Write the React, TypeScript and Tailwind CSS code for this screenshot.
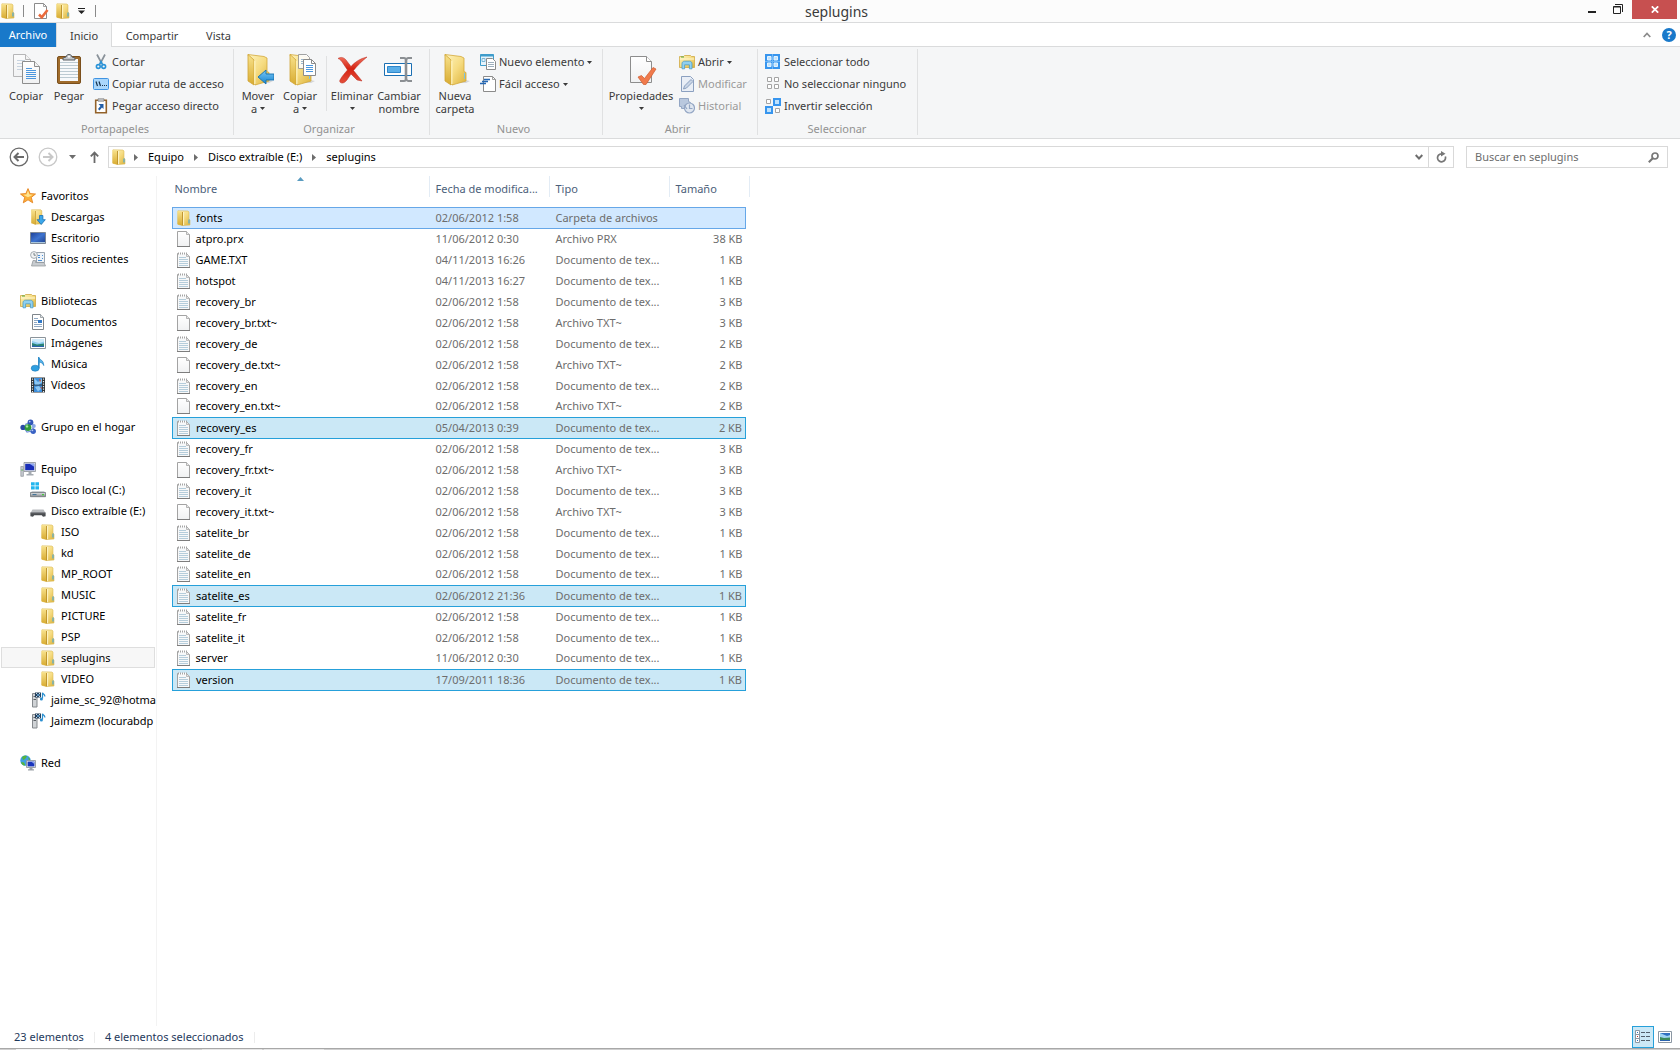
import type { ReactNode } from "react"
import { clsx } from "clsx"

type IconProps = { className?: string }

/* ---------- shared gradients ---------- */

function Gradients() {
  return (
    <svg className="absolute size-0" aria-hidden="true">
      <defs>
        <linearGradient id="gold" x1="0" y1="0" x2="1" y2="1">
          <stop offset="0" stopColor="#fdf3bd" />
          <stop offset="0.5" stopColor="#f6dc82" />
          <stop offset="1" stopColor="#dcb23a" />
        </linearGradient>
        <linearGradient id="goldDark" x1="0" y1="0" x2="0" y2="1">
          <stop offset="0" stopColor="#f8e28c" />
          <stop offset="1" stopColor="#d8ab30" />
        </linearGradient>
        <linearGradient id="sky" x1="0" y1="0" x2="0" y2="1">
          <stop offset="0" stopColor="#7cc8f5" />
          <stop offset="1" stopColor="#1583d0" />
        </linearGradient>
        <linearGradient id="page" x1="0" y1="0" x2="0" y2="1">
          <stop offset="0" stopColor="#ffffff" />
          <stop offset="1" stopColor="#f0f1f2" />
        </linearGradient>
        <linearGradient id="navy" x1="0" y1="0" x2="1" y2="1">
          <stop offset="0" stopColor="#1c3f96" />
          <stop offset="0.5" stopColor="#3f74cf" />
          <stop offset="1" stopColor="#1b3d8c" />
        </linearGradient>
        <linearGradient id="red" x1="0" y1="0" x2="0" y2="1">
          <stop offset="0" stopColor="#f0705c" />
          <stop offset="0.45" stopColor="#d52312" />
          <stop offset="1" stopColor="#e4503c" />
        </linearGradient>
        <linearGradient id="metal" x1="0" y1="0" x2="0" y2="1">
          <stop offset="0" stopColor="#dfe2e5" />
          <stop offset="1" stopColor="#85898d" />
        </linearGradient>
      </defs>
    </svg>
  )
}

/* ---------- small icons, 16px ---------- */

function Svg16({ children, className }: { children: ReactNode; className?: string }) {
  return (
    <svg width="16" height="16" viewBox="0 0 16 16" fill="none" aria-hidden="true" className={clsx("shrink-0", className)}>
      {children}
    </svg>
  )
}

const FolderIcon = ({ className }: IconProps) => (
  <Svg16 className={className}>
    <path d="M2 .8 12 1l1 1v7l1 1v5l-7 .6-5-1.2z" fill="url(#gold)" stroke="#dcbc5c" strokeWidth=".6" />
    <path d="M1.4.8 6 2v13.6l-4.6-1.4z" fill="url(#goldDark)" />
    <path d="M6.5 2v13.5" stroke="#b98d26" strokeWidth=".9" />
    <path d="M7.6 2v13" stroke="#fff6c8" strokeWidth="1" />
    <path d="M13 9.5v4" stroke="#4ea9d8" strokeWidth="1.2" />
  </Svg16>
)

const FileIcon = () => (
  <Svg16>
    <path d="M1.5 .5h9l3 3v12h-12z" fill="url(#page)" stroke="#a3a3a3" />
    <path d="M10.5 .5v3h3" fill="#e8e8e8" stroke="#a3a3a3" strokeWidth=".8" />
    <path d="M1 15.5h13" stroke="#7d7d7d" />
  </Svg16>
)

const TextFileIcon = () => (
  <Svg16>
    <path d="M1.5 1.5h9l3 3v11h-12z" fill="#f7f8f9" stroke="#a3a3a3" />
    <path d="M2 1.5h9" stroke="#fff" strokeWidth="1.4" />
    <path d="M2.5 .5v2M4.500 .5v2M6.5 .5v2M8.5 .5v2M10.5 .5v2" stroke="#9a9a9a" strokeWidth=".9" />
    <path d="M10.5 2v2.500h3" fill="#e6e6e6" stroke="#a6a6a6" strokeWidth=".7" />
    <path d="M3 5.5h7M3 7.5h9M3 9.5h9M3 11.5h9M3 13.5h9" stroke="#b5cddb" />
    <path d="M1 15.5h13" stroke="#7d7d7d" />
  </Svg16>
)

const StarIcon = () => (
  <Svg16>
    <path d="M8 .6l2.1 5 5.4.4-4.2 3.4 1.4 5.4L8 11.8l-4.7 3 1.4-5.4L.5 6l5.4-.4z" fill="#fbb03a" stroke="#e58320" strokeWidth=".9" />
    <path d="M8 2.6l1.4 3.8 3.6.3L8 9.3 3.2 6.7l3.3-.3z" fill="#ffe592" />
  </Svg16>
)

const DownloadsIcon = () => (
  <Svg16>
    <path d="M1.5 .8h9.3l1 1v13l-7 .4z" fill="url(#gold)" stroke="#d7b451" strokeWidth=".6" />
    <path d="M1.2.8 5 2v13.6l-3.8-1.4z" fill="url(#goldDark)" />
    <path d="M5.5 2v13.5" stroke="#c79c33" strokeWidth=".8" />
    <path d="M9.5 6.5h3.4v4.2h2.4l-4.1 4.8-4.1-4.8h2.4z" fill="#3ba7ea" stroke="#1b71b5" strokeWidth=".8" />
  </Svg16>
)

const DesktopIcon = () => (
  <Svg16>
    <path d="M.5 2.5h15v11h-15z" fill="url(#navy)" stroke="#7d8896" />
    <path d="M1 12.5h14" stroke="#a9c6dc" />
  </Svg16>
)

const RecentIcon = () => (
  <Svg16>
    <path d="M6.5 1.5h8v10h-8z" fill="#eef3f8" stroke="#9aa5af" />
    <path d="M8 4.5h2M8 6.5h2M12 4.5h1M12 7.5h1M8 9.5h4" stroke="#4a90d8" />
    <circle cx="4" cy="4" r="3.4" fill="#f2f4f5" stroke="#9ca3a8" strokeWidth=".9" />
    <path d="M4 2v2.2h1.8" stroke="#5c646b" strokeWidth=".8" />
    <path d="M3 9.5h2.5v2H14l1.5 3.5H1.5z" fill="#c8ccd0" stroke="#8d9297" strokeWidth=".7" />
  </Svg16>
)

const LibraryIcon = () => (
  <Svg16>
    <path d="M.5 2.5h4l1-1h6l1 1h3v11H.5z" fill="url(#gold)" stroke="#cfa842" strokeWidth=".8" />
    <path d="M2 3h3" stroke="#58a942" />
    <path d="M.8 5h14.4" stroke="#fff8d5" />
    <path d="M3 14.8v-5c0-1.6 1-2.6 2.4-2.6h5.2c1.4 0 2.4 1 2.4 2.6v5h-2.6v-4H5.6v4z" fill="#8fd0f0" stroke="#4a9cc8" strokeWidth=".8" />
  </Svg16>
)

const DocumentsIcon = () => (
  <Svg16>
    <path d="M2.5 .5h8l3 3v12h-11z" fill="#fff" stroke="#7f868c" />
    <path d="M10.5 .5v3h3" fill="#dfe3e6" stroke="#8d9499" strokeWidth=".8" />
    <path d="M4 4.5h4M4 6.5h4M4 8.5h3M4 10.5h8M4 12.5h8" stroke="#90a9c4" />
    <path d="M8 6h4v3H8z" fill="#2f78c8" />
  </Svg16>
)

const PicturesIcon = () => (
  <Svg16>
    <path d="M.5 2.5h15v11h-15z" fill="#fff" stroke="#8b949b" />
    <path d="M2 4h12v8H2z" fill="#8fcdf0" />
    <path d="M2 4h12v2.5L9 8 2 6z" fill="#cfeaf9" />
    <path d="M2 8l5 1.500 7-1V12H2z" fill="#2b8375" />
    <path d="M2 10.5l5 .5h7v1H2z" fill="#2a62ae" />
  </Svg16>
)

const MusicIcon = () => (
  <Svg16>
    <path d="M8.5 12V1c1 3 5.2 2.8 5.2 8.5C13 7 11 6.5 9.6 6.2" fill="#58b4ea" stroke="#2788c6" strokeWidth=".8" />
    <ellipse cx="5.2" cy="12.2" rx="4" ry="3" fill="#2f9fe0" stroke="#1f79b6" strokeWidth=".6" />
    <path d="M9 12V1.5" stroke="#2788c6" strokeWidth="1.2" />
  </Svg16>
)

const VideosIcon = () => (
  <Svg16>
    <path d="M1 .5h14v15H1z" fill="#2e3438" />
    <path d="M4 1h8v6.5H4zM4 8.5h8V15H4z" fill="#3d8fdc" />
    <path d="M4 1l4 4 4-3.5v4L9 7.5H5zM5 10l4-1 2 3-3 2.5z" fill="#8cc7f3" />
    <path d="M9 2l2 1-1 2.5zM10 9.5l2 1v2z" fill="#c44f35" />
    <path d="M2.5 1.5v14M13.5 1.5v14" stroke="#e6eaec" strokeWidth="1.2" strokeDasharray="1.3 1.2" />
  </Svg16>
)

const HomegroupIcon = () => (
  <Svg16>
    <path d="M5 5.5l6-2.5M4 9l3 4 5-1M13 5v7" stroke="#6f8fd8" strokeWidth="1.2" />
    <circle cx="10.5" cy="3.4" r="2.9" fill="#3157b8" />
    <circle cx="3" cy="8.4" r="2.6" fill="#2a4aa6" />
    <circle cx="13.2" cy="12.2" r="2.7" fill="#3a62c4" />
    <circle cx="13.8" cy="7" r="2" fill="#8aa8e6" />
    <circle cx="8" cy="8.6" r="3.4" fill="#2f9a3a" />
    <circle cx="7" cy="7.4" r="1.2" fill="#a8e6a0" />
    <circle cx="9.7" cy="2.6" r=".9" fill="#b6c8f2" />
    <circle cx="12.4" cy="11.3" r=".9" fill="#b6c8f2" />
  </Svg16>
)

const ComputerIcon = () => (
  <Svg16>
    <path d="M4 1.5h11.5v9H4z" fill="#dde1e6" stroke="#8b9198" strokeWidth=".8" />
    <path d="M5.2 2.8h9v6.4h-9z" fill="#1a2fb8" />
    <path d="M9.5 2.8h4.7v3z" fill="#8fa8f0" />
    <path d="M8.5 11h3v2h2v1.5H6.5V13h2z" fill="#a5abb2" />
    <path d="M.8 5.5h2.6v9.8H.8z" fill="#c6cad0" stroke="#7f858c" strokeWidth=".6" />
    <path d="M1.4 9h1.4" stroke="#3fae3a" />
  </Svg16>
)

const LocalDiskIcon = () => (
  <Svg16>
    <path d="M1 .2h3.7v3.3H1zM5.4 .2H9v3.3H5.4zM1 4.2h3.7v3.2H1zM5.4 4.2H9v3.2H5.4z" fill="#22b5ee" />
    <path d="M2 9h12l1.5 2H.5z" fill="#c9ced3" />
    <path d="M.5 10.5h15v4.2H.5z" fill="url(#metal)" stroke="#62686e" strokeWidth=".7" />
    <path d="M2.5 12.6h4" stroke="#3a6f96" />
    <path d="M12 12.6h2" stroke="#46c83c" strokeWidth="1.4" />
  </Svg16>
)

const RemovableDiskIcon = () => (
  <Svg16>
    <path d="M2.5 6.5h11l2 3.5H.5z" fill="#b9bcbf" />
    <path d="M.4 9.5h15.2v3.8l-2.6.4-1.2-1.4H4.2L3 13.7l-2.6-.4z" fill="#4a4d50" />
    <path d="M1 9.8h14" stroke="#85888b" strokeWidth=".8" />
  </Svg16>
)

const DeviceIcon = () => (
  <Svg16>
    <path d="M2.5 1.5H7V15H2.5z" fill="#d0d3d6" stroke="#85898d" />
    <path d="M3.5 4.5H6M3.5 7.5H6" stroke="#5a5f64" />
    <path d="M5 .5h6v5H5z" fill="#25405c" />
    <path d="M6 1.5h1M9 1.5h1M6 4.500h1M9 4.500h1" stroke="#e2eef6" strokeWidth=".9" />
    <path d="M7 3h2.500" stroke="#6db4e6" strokeWidth="1.4" />
    <path d="M12.500 6.500V.8c.6 1.300 2.400 1.300 2.400 3.600" stroke="#2a8fd0" strokeWidth="1.2" />
    <circle cx="11.400" cy="7" r="1.5" fill="#2a8fd0" />
  </Svg16>
)

const NetworkIcon = () => (
  <Svg16>
    <circle cx="5.5" cy="5.5" r="5.2" fill="#3f9fe2" />
    <path d="M2 2.2c1.8-1.8 4-1.6 5-1L5.2 4 3 5zM1 7l3 .5 1.4 3H4C2.4 10 1.4 8.6 1 7zM8 2l2.2 2-1 2z" fill="#55b53c" />
    <path d="M6.5 5.5h9v7h-9z" fill="#e4e8ec" stroke="#888e95" strokeWidth=".8" />
    <path d="M7.6 6.6h6.8v4.8H7.6z" fill="#1a35bd" />
    <path d="M11 6.6h3.4V9z" fill="#8fa8f0" />
    <path d="M9.5 13h3v1.2H14v1.3H8v-1.3h1.5z" fill="#9da3aa" />
  </Svg16>
)

const CutIcon = () => (
  <Svg16>
    <path d="M4 .5L9 10M12 .5L7 10" stroke="#8a929a" strokeWidth="1.7" />
    <circle cx="5.3" cy="12.5" r="1.9" stroke="#2a93d8" strokeWidth="1.6" />
    <circle cx="10.7" cy="12.5" r="1.9" stroke="#2a93d8" strokeWidth="1.6" />
    <path d="M6.5 10.500L8 7.500l1.500 3" stroke="#2a93d8" strokeWidth="1.5" />
  </Svg16>
)

const CopyPathIcon = () => (
  <Svg16>
    <rect x=".5" y="2.5" width="15" height="11" rx="1" fill="#a9d6fb" stroke="#3f93e2" />
    <path d="M3 5.5l1.5 4.500M6 5.500l1.500 4.500" stroke="#17324d" strokeWidth="1.2" />
    <path d="M9 9.500h1M11 9.500h1M13 9.500h1" stroke="#17324d" strokeWidth="1.2" />
  </Svg16>
)

const PasteShortcutIcon = () => (
  <Svg16>
    <path d="M2.7 2.2h10.6v12.600H2.700z" fill="#fff" stroke="#93622a" strokeWidth="1.6" />
    <path d="M5 .8h6v2.400H5z" fill="#c9cdd1" stroke="#777" strokeWidth=".7" />
    <path d="M5.500 6h5v5L9 9.500 6.500 12.500 5 11l2.500-3z" fill="#215ea8" />
  </Svg16>
)

const NewItemIcon = () => (
  <Svg16>
    <path d="M.5 .5h13v11H.5z" fill="#e6f3fb" stroke="#3f9ccb" />
    <path d="M.5 1.5h13" stroke="#3f9ccb" strokeWidth="2" />
    <path d="M2 4.5h3v3H2z" stroke="#7bb7d8" />
    <path d="M6.5 4.5h6l3 3v8h-9z" fill="#fff" stroke="#8b8b8b" />
    <path d="M8 8.5h6M8 10.5h6M8 12.5h6" stroke="#9fb0bd" />
  </Svg16>
)

const EasyAccessIcon = () => (
  <Svg16>
    <path d="M3.5 .5h9l3 3v12h-12z" fill="#fff" stroke="#8b8b8b" />
    <path d="M12.5 .5v3h3" stroke="#8b8b8b" strokeWidth=".8" />
    <path d="M4 3.5h6M2 5.5h6M0 7.5h6" stroke="#2467b3" strokeWidth="1.3" />
  </Svg16>
)

const EditIcon = () => (
  <Svg16>
    <path d="M2.5 .5h9l3 3v12h-12z" fill="#e9eef6" stroke="#8ba0c0" />
    <path d="M4.5 13l1-3L12 3.500l2 2L7.500 12z" fill="#c9d5e6" stroke="#8ba0c0" />
  </Svg16>
)

const HistoryIcon = () => (
  <Svg16>
    <path d="M.5 .5h9v3l2 1v6h-9v-2h-2z" fill="#b9c8de" stroke="#93a6c4" />
    <circle cx="10.5" cy="10" r="5" fill="#dfe6f0" stroke="#93a6c4" strokeWidth="1.2" />
    <path d="M10.5 6.5v4h3M5 7l3 4" stroke="#93a6c4" strokeWidth="1.2" />
  </Svg16>
)

const SelectAllIcon = () => (
  <Svg16>
    <path d="M0 0h15v15H0z" fill="#3795ee" />
    <path d="M2.5 2.5H6V6H2.5zM9 2.5h3.5V6H9zM2.5 9H6v3.500H2.500zM9 9h3.500v3.500H9z" fill="#bfe2fd" stroke="#e4f3fe" />
    <path d="M7.5 0v15M0 7.5h15" stroke="#6eb6f7" />
  </Svg16>
)

const SelectNoneIcon = () => (
  <Svg16>
    <path d="M2.5 1.5h4v4h-4zM9.5 1.5h4v4h-4zM2.5 8.5h4v4h-4zM9.5 8.5h4v4h-4z" fill="#fff" stroke="#a4a4a4" />
  </Svg16>
)

const InvertSelectionIcon = () => (
  <Svg16>
    <path d="M1.5 1.5h4v4h-4zM10.5 10.5h4v4h-4z" fill="#fff" stroke="#a4a4a4" />
    <path d="M9 1h6v6H9zM1 9h6v6H1z" fill="#bfe2fd" stroke="#3795ee" strokeWidth="2" />
  </Svg16>
)

const CheckDocIcon = () => (
  <Svg16>
    <path d="M1.5 .5h9l3 3v12h-12z" fill="#fff" stroke="#8b8b8b" />
    <path d="M10.5 .5v3h3" stroke="#8b8b8b" strokeWidth=".8" />
    <path d="M6 11.5l2.8 2.8L14.5 7" stroke="#ea6a3c" strokeWidth="2.6" />
  </Svg16>
)

/* ---------- large ribbon icons, 32px ---------- */

function Svg32({ children }: { children: ReactNode }) {
  return (
    <svg width="32" height="32" viewBox="0 0 32 32" fill="none" aria-hidden="true" className="shrink-0">
      {children}
    </svg>
  )
}

const FolderShape = () => (
  <>
    <path d="M14 29l12-3 5 1-4 2z" fill="#00000022" />
    <path d="M6 .5L22 2.500l3 1.500v13.500l2 1V27l-14 4z" fill="url(#gold)" stroke="#d3a83a" strokeWidth=".8" />
    <path d="M6 .5l6 5.500v25l-6-4z" fill="url(#goldDark)" stroke="#cfa336" strokeWidth=".8" />
    <path d="M12.8 6.500V30" stroke="#fff5c4" strokeWidth="1.2" />
    <path d="M25.500 19v6" stroke="#7ec3e2" />
  </>
)

const PageShape = () => (
  <>
    <path d="M.5 .5h12l5 5v17H.5z" fill="url(#page)" stroke="#8d8d8d" />
    <path d="M12.5 .5v5h5" fill="#f2f2f2" stroke="#8d8d8d" />
  </>
)

const CopyLargeIcon = () => (
  <Svg32>
    <g transform="translate(3 0)" opacity=".6">
      <PageShape />
      <path d="M4 6.5h8M4 9.5h10M4 12.5h10M4 15.5h10" stroke="#a9bdd2" />
    </g>
    <g transform="translate(12 7)">
      <PageShape />
      <path d="M4 7.5h6M4 9.5h10M4 11.5h10M4 13.5h10M4 15.5h10M4 17.5h10" stroke="#4c97de" />
    </g>
  </Svg32>
)

const PasteLargeIcon = () => (
  <Svg32>
    <rect x="4.500" y="2.500" width="23" height="27" rx="1.500" fill="#a06c2c" stroke="#7a4f1c" />
    <path d="M7 5h18v22H7z" fill="#f7f9fb" />
    <path d="M7 8.5h18M7 11.5h18M7 14.5h18M7 17.5h18M7 20.5h18M7 23.5h18" stroke="#bccad2" />
    <path d="M10 6V4l3-1c.5-2 1.5-2.500 3-2.500s2.500.5 3 2.500l3 1v2z" fill="#c2c6ca" stroke="#5b5f63" />
    <circle cx="16" cy="2.800" r="1" fill="#fff" />
  </Svg32>
)

const MoveToIcon = () => (
  <Svg32>
    <FolderShape />
    <path d="M16 23l8-7v4h8v6h-8v4z" fill="url(#sky)" stroke="#156faf" strokeWidth=".9" />
  </Svg32>
)

const CopyToIcon = () => (
  <Svg32>
    <FolderShape />
    <g transform="translate(14 0)" opacity=".9">
      <path d="M.5 .5h8l3 3v11H.5z" fill="#fff" stroke="#999" />
      <path d="M3 5.5h6M3 7.5h6M3 9.5h6" stroke="#8fb2d8" />
    </g>
    <g transform="translate(19 5)">
      <path d="M.5 .5h8l4 4v12H.5z" fill="#fff" stroke="#8b8b8b" />
      <path d="M8.5 .5v4h4" stroke="#8b8b8b" />
      <path d="M3 6.5h7M3 8.5h7M3 10.5h7M3 12.5h7" stroke="#4c97de" />
    </g>
  </Svg32>
)

const DeleteIcon = () => (
  <Svg32>
    <path d="M2 4.500c3-2 6-1 8 1.500l5 6.500C19 8 24 4.500 31 3c-5 4-10 9-13.500 13.500L26 27l-5-1-6-6c-3 4-4.500 8-8 9-2.500.5-4-1.500-3-3 2-4 5-7 7.500-10L6.500 8.500C5 6.500 4 5 2 4.500z" fill="url(#red)" stroke="#b8271a" strokeWidth=".5" />
  </Svg32>
)

const RenameIcon = () => (
  <Svg32>
    <path d="M1.500 9.500h27v12h-27z" fill="#fff" stroke="#1a6fb3" />
    <path d="M4.500 12.500h13v6h-13z" fill="#5aaee8" stroke="#2f86c9" />
    <path d="M17 4h4c1.5 0 2 1 2 2s.5-2 2-2h4M17 27h4c1.500 0 2-1 2-2s.5 2 2 2h4" stroke="#8b8f93" strokeWidth="1.8" />
    <path d="M23 5v21" stroke="#8b8f93" strokeWidth="2.6" />
  </Svg32>
)

const NewFolderIcon = () => (
  <Svg32>
    <FolderShape />
  </Svg32>
)

const PropertiesIcon = () => (
  <Svg32>
    <path d="M5.500 2.500h16l5 5v21h-21z" fill="url(#page)" stroke="#8d8d8d" />
    <path d="M21.500 2.500v5h5" fill="#fff" stroke="#8d8d8d" />
    <path d="M13 23l3.500-1.500 3 3L28 13.500l3 1.500-10 15.500h-2.500z" fill="#f07a4c" stroke="#cf5a2c" strokeWidth=".7" />
  </Svg32>
)

const Caret = () => (
  <svg width="5" height="3" viewBox="0 0 5 3" aria-hidden="true">
    <path d="M0 0h5L2.500 3z" fill="currentColor" />
  </svg>
)

/* ---------- ribbon ---------- */

function BigButton({ icon, lines, caret, className }: { icon: ReactNode; lines: string[]; caret?: boolean; className: string }) {
  const last = lines.length - 1
  return (
    <button className={clsx("flex flex-col items-center pt-[5px] leading-[13px]", className)}>
      {icon}
      <span className="mt-[3px] flex flex-col items-center whitespace-nowrap">
        {lines.map((line, i) => (
          <span key={i} className="flex h-[13px] items-center gap-[3px]">
            {line}
            {caret && i === last && <Caret />}
          </span>
        ))}
      </span>
    </button>
  )
}

function SmallButton({ icon, label, caret, disabled }: { icon: ReactNode; label: string; caret?: boolean; disabled?: boolean }) {
  return (
    <button disabled={disabled} className="flex h-[22px] items-center gap-[3px] whitespace-nowrap disabled:text-[#9a9a9a]">
      {icon}
      {label}
      {caret && <Caret />}
    </button>
  )
}

function RibbonGroup({ title, className, children }: { title: string; className: string; children: ReactNode }) {
  return (
    <section aria-label={title} className={clsx("flex shrink-0 flex-col border-r border-[#e0e1e2]", className)}>
      <div className="flex h-[73px] items-start">{children}</div>
      <h2 className="pr-2 text-center leading-[13px] text-[#929292]">{title}</h2>
    </section>
  )
}

function Ribbon() {
  return (
    <div className="flex border-b border-[#dadbdc] bg-[#f5f6f7] pt-0.5 pb-[3px] text-[#3a3a3a]">
      <RibbonGroup title="Portapapeles" className="w-[234px] pl-[5px]">
        <BigButton icon={<CopyLargeIcon />} lines={["Copiar"]} className="w-[42px]" />
        <BigButton icon={<PasteLargeIcon />} lines={["Pegar"]} className="w-[44px]" />
        <div className="ml-0.5 flex flex-col pt-0.5">
          <SmallButton icon={<CutIcon />} label="Cortar" />
          <SmallButton icon={<CopyPathIcon />} label="Copiar ruta de acceso" />
          <SmallButton icon={<PasteShortcutIcon />} label="Pegar acceso directo" />
        </div>
      </RibbonGroup>

      <RibbonGroup title="Organizar" className="w-[196px] pl-[3px]">
        <BigButton icon={<MoveToIcon />} lines={["Mover", "a"]} caret className="w-[42px]" />
        <BigButton icon={<CopyToIcon />} lines={["Copiar", "a"]} caret className="w-[42px]" />
        <div className="mt-[7px] mr-[3px] ml-[5px] h-[55px] w-px bg-[#e0e1e2]" />
        <BigButton icon={<DeleteIcon />} lines={["Eliminar", ""]} caret className="w-[44px]" />
        <BigButton icon={<RenameIcon />} lines={["Cambiar", "nombre"]} className="w-[50px]" />
      </RibbonGroup>

      <RibbonGroup title="Nuevo" className="w-[173px] pl-[3px]">
        <BigButton icon={<NewFolderIcon />} lines={["Nueva", "carpeta"]} className="w-[44px]" />
        <div className="ml-[3px] flex flex-col pt-0.5">
          <SmallButton icon={<NewItemIcon />} label="Nuevo elemento" caret />
          <SmallButton icon={<EasyAccessIcon />} label="Fácil acceso" caret />
        </div>
      </RibbonGroup>

      <RibbonGroup title="Abrir" className="w-[155px] pl-[3px]">
        <BigButton icon={<PropertiesIcon />} lines={["Propiedades", ""]} caret className="w-[70px]" />
        <div className="ml-[3px] flex flex-col pt-0.5">
          <SmallButton icon={<LibraryIcon />} label="Abrir" caret />
          <SmallButton icon={<EditIcon />} label="Modificar" disabled />
          <SmallButton icon={<HistoryIcon />} label="Historial" disabled />
        </div>
      </RibbonGroup>

      <RibbonGroup title="Seleccionar" className="w-[160px] pl-[7px]">
        <div className="flex flex-col pt-0.5">
          <SmallButton icon={<SelectAllIcon />} label="Seleccionar todo" />
          <SmallButton icon={<SelectNoneIcon />} label="No seleccionar ninguno" />
          <SmallButton icon={<InvertSelectionIcon />} label="Invertir selección" />
        </div>
      </RibbonGroup>
    </div>
  )
}

/* ---------- window chrome ---------- */

function TitleBar() {
  return (
    <header className="flex h-[23px] border-b border-[#dadbdc] bg-[#fcfcfc] pr-[3px]">
      <div className="flex flex-1 items-center">
        <FolderIcon />
        <span className="ml-[7px] h-3 w-px bg-[#8a8a8a]" />
        <button aria-label="Propiedades" className="ml-[9px]">
          <CheckDocIcon />
        </button>
        <button aria-label="Nueva carpeta" className="ml-[6px]">
          <FolderIcon />
        </button>
        <button aria-label="Personalizar barra de herramientas" className="ml-[7px]">
          <svg width="7" height="6" viewBox="0 0 7 6" aria-hidden="true">
            <path d="M0 0h7v1H0zM0 2.500h7L3.500 6z" fill="#222" />
          </svg>
        </button>
        <span className="ml-[10px] h-3 w-px bg-[#8a8a8a]" />
      </div>
      <h1 className="mr-1 text-[14px] leading-[24px] text-[#3a3a3a]">seplugins</h1>
      <div className="flex flex-1 items-start justify-end text-[#222]">
        <button aria-label="Minimizar" className="flex h-[19px] w-6 justify-center pt-[11px]">
          <span className="h-0.5 w-2 bg-current" />
        </button>
        <button aria-label="Restaurar" className="flex h-[19px] w-7 justify-center pt-1">
          <svg width="10" height="10" viewBox="0 0 10 10" fill="none" stroke="currentColor" aria-hidden="true">
            <path d="M.5 2.500h7v7h-7zM.5 3h7M2 .5h7.500V8" />
          </svg>
        </button>
        <button aria-label="Cerrar" className="flex h-[19px] w-[45px] items-center justify-center bg-[#c75050] text-white">
          <svg width="8" height="7" viewBox="0 0 8 7" fill="none" stroke="currentColor" strokeWidth="1.7" aria-hidden="true">
            <path d="M.8 .3l6.400 6.400M7.200 .3L.8 6.700" />
          </svg>
        </button>
      </div>
    </header>
  )
}

function Tabs() {
  return (
    <div className="flex h-6 items-stretch text-[#3a3a3a] shadow-[inset_0_-1px_0_#dadbdc]">
      <button className="w-14 bg-[#1979ca] pb-px text-white">Archivo</button>
      <button className="w-14 border-x border-[#dadbdc] bg-[#f5f6f7] pt-px">Inicio</button>
      <button className="w-20 pt-px">Compartir</button>
      <button className="w-[53px] pt-px">Vista</button>
      <div className="flex flex-1 items-center justify-end gap-[11px] pr-1">
        <button aria-label="Minimizar la cinta">
          <svg width="8" height="6" viewBox="0 0 8 6" fill="none" aria-hidden="true">
            <path d="M.7 5L4 1.500 7.300 5" stroke="#8b8b8b" strokeWidth="1.7" />
          </svg>
        </button>
        <button aria-label="Ayuda" className="size-[14px] rounded-full bg-[#1979ca] leading-[14px] font-bold text-white">
          ?
        </button>
      </div>
    </div>
  )
}

const CrumbArrow = () => (
  <svg width="4" height="7" viewBox="0 0 4 7" aria-hidden="true" className="mx-[10px]">
    <path d="M0 0l4 3.500L0 7z" fill="#6d6d6d" />
  </svg>
)

function AddressBar() {
  return (
    <div className="flex h-[37px] items-start pt-[7px] pr-3">
      <div className="flex h-[22px] w-[108px] shrink-0 items-center pl-[9px]">
        <button aria-label="Atrás">
          <svg width="20" height="20" viewBox="0 0 20 20" fill="none" stroke="#6a6a6a" aria-hidden="true">
            <circle cx="10" cy="10" r="8.800" strokeWidth="1.3" />
            <path d="M15 10H6M9.500 6L5.500 10l4 4" strokeWidth="2" />
          </svg>
        </button>
        <button aria-label="Adelante" className="ml-[9px]">
          <svg width="20" height="20" viewBox="0 0 20 20" fill="none" stroke="#c8c8c8" aria-hidden="true">
            <circle cx="10" cy="10" r="8.800" strokeWidth="1.3" />
            <path d="M5 10h9M10.500 6l4 4-4 4" strokeWidth="2" />
          </svg>
        </button>
        <button aria-label="Ubicaciones recientes" className="ml-[11px] text-[#6d6d6d]">
          <svg width="7" height="4" viewBox="0 0 7 4" aria-hidden="true">
            <path d="M0 0h7L3.500 4z" fill="currentColor" />
          </svg>
        </button>
        <button aria-label="Subir" className="ml-[14px]">
          <svg width="9" height="12" viewBox="0 0 9 12" fill="none" stroke="#6a6a6a" aria-hidden="true">
            <path d="M4.500 12V2M.8 5.300L4.500 1.500l3.700 3.800" strokeWidth="1.8" />
          </svg>
        </button>
      </div>
      <div className="flex h-[22px] flex-1 items-center border border-[#d9d9d9] pl-0.5">
        <FolderIcon className="-mr-[3px]" />
        <nav aria-label="Ruta" className="flex flex-1 items-center">
          <CrumbArrow />
          <a href="#equipo">Equipo</a>
          <CrumbArrow />
          <a href="#disco-e">Disco extraíble (E:)</a>
          <CrumbArrow />
          <a href="#seplugins">seplugins</a>
        </nav>
        <button aria-label="Ubicaciones anteriores" className="mr-[5px]">
          <svg width="8" height="6" viewBox="0 0 8 6" fill="none" aria-hidden="true">
            <path d="M.7 1L4 4.500 7.300 1" stroke="#6d6d6d" strokeWidth="1.9" />
          </svg>
        </button>
        <button aria-label="Actualizar" className="flex h-5 w-[25px] items-center justify-center border-l border-[#d9d9d9]">
          <svg width="11" height="12" viewBox="0 0 11 12" fill="none" aria-hidden="true">
            <path d="M5.500 2.800A4 4 0 1 0 9.300 5.500" stroke="#777" strokeWidth="1.7" />
            <path d="M5 0l4.500 2.800L5 5.600z" fill="#777" />
          </svg>
        </button>
      </div>
      <div className="ml-3 flex h-[22px] w-[202px] items-center border border-[#d9d9d9] pr-2 pl-2">
        <input
          type="text"
          aria-label="Buscar en seplugins"
          placeholder="Buscar en seplugins"
          className="min-w-0 flex-1 outline-none placeholder:text-[#6d6d6d]"
        />
        <svg width="11" height="11" viewBox="0 0 11 11" fill="none" stroke="#777" aria-hidden="true">
          <circle cx="7" cy="4" r="3" strokeWidth="1.7" />
          <path d="M4.800 6.200L.8 10.200" strokeWidth="2" />
        </svg>
      </div>
    </div>
  )
}

/* ---------- navigation pane ---------- */

type NavItem = { label: string; icon: ReactNode; level: 0 | 1 | 2; selected?: boolean }

const navGroups: NavItem[][] = [
  [
    { label: "Favoritos", icon: <StarIcon />, level: 0 },
    { label: "Descargas", icon: <DownloadsIcon />, level: 1 },
    { label: "Escritorio", icon: <DesktopIcon />, level: 1 },
    { label: "Sitios recientes", icon: <RecentIcon />, level: 1 },
  ],
  [
    { label: "Bibliotecas", icon: <LibraryIcon />, level: 0 },
    { label: "Documentos", icon: <DocumentsIcon />, level: 1 },
    { label: "Imágenes", icon: <PicturesIcon />, level: 1 },
    { label: "Música", icon: <MusicIcon />, level: 1 },
    { label: "Vídeos", icon: <VideosIcon />, level: 1 },
  ],
  [{ label: "Grupo en el hogar", icon: <HomegroupIcon />, level: 0 }],
  [
    { label: "Equipo", icon: <ComputerIcon />, level: 0 },
    { label: "Disco local (C:)", icon: <LocalDiskIcon />, level: 1 },
    { label: "Disco extraíble (E:)", icon: <RemovableDiskIcon />, level: 1 },
    { label: "ISO", icon: <FolderIcon />, level: 2 },
    { label: "kd", icon: <FolderIcon />, level: 2 },
    { label: "MP_ROOT", icon: <FolderIcon />, level: 2 },
    { label: "MUSIC", icon: <FolderIcon />, level: 2 },
    { label: "PICTURE", icon: <FolderIcon />, level: 2 },
    { label: "PSP", icon: <FolderIcon />, level: 2 },
    { label: "seplugins", icon: <FolderIcon />, level: 2, selected: true },
    { label: "VIDEO", icon: <FolderIcon />, level: 2 },
    { label: "jaime_sc_92@hotma", icon: <DeviceIcon />, level: 1 },
    { label: "Jaimezm (locurabdp", icon: <DeviceIcon />, level: 1 },
  ],
  [{ label: "Red", icon: <NetworkIcon />, level: 0 }],
]

const indent = { 0: "pl-[18px]", 1: "pl-[28px]", 2: "pl-[38px]" }

function Sidebar() {
  return (
    <nav aria-label="Panel de navegación" className="flex w-[157px] shrink-0 flex-col gap-[21px] border-r border-[#f3f3f3] px-px pt-[9px]">
      {navGroups.map((group, i) => (
        <ul key={i}>
          {group.map((item) => (
            <li key={item.label}>
              <a
                href="#"
                className={clsx(
                  "flex h-[21px] items-center gap-[5px] border whitespace-nowrap",
                  indent[item.level],
                  item.selected ? "border-[#dedede] bg-[#f7f7f7]" : "border-transparent"
                )}
              >
                {item.icon}
                {item.label}
              </a>
            </li>
          ))}
        </ul>
      ))}
    </nav>
  )
}

/* ---------- file list ---------- */

type Row = { name: string; date: string; kind: "folder" | "txt" | "prx" | "bak"; size: string; state?: "focused" | "selected" }

const rows: Row[] = [
  { name: "fonts", date: "02/06/2012 1:58", kind: "folder", size: "", state: "focused" },
  { name: "atpro.prx", date: "11/06/2012 0:30", kind: "prx", size: "38 KB" },
  { name: "GAME.TXT", date: "04/11/2013 16:26", kind: "txt", size: "1 KB" },
  { name: "hotspot", date: "04/11/2013 16:27", kind: "txt", size: "1 KB" },
  { name: "recovery_br", date: "02/06/2012 1:58", kind: "txt", size: "3 KB" },
  { name: "recovery_br.txt~", date: "02/06/2012 1:58", kind: "bak", size: "3 KB" },
  { name: "recovery_de", date: "02/06/2012 1:58", kind: "txt", size: "2 KB" },
  { name: "recovery_de.txt~", date: "02/06/2012 1:58", kind: "bak", size: "2 KB" },
  { name: "recovery_en", date: "02/06/2012 1:58", kind: "txt", size: "2 KB" },
  { name: "recovery_en.txt~", date: "02/06/2012 1:58", kind: "bak", size: "2 KB" },
  { name: "recovery_es", date: "05/04/2013 0:39", kind: "txt", size: "2 KB", state: "selected" },
  { name: "recovery_fr", date: "02/06/2012 1:58", kind: "txt", size: "3 KB" },
  { name: "recovery_fr.txt~", date: "02/06/2012 1:58", kind: "bak", size: "3 KB" },
  { name: "recovery_it", date: "02/06/2012 1:58", kind: "txt", size: "3 KB" },
  { name: "recovery_it.txt~", date: "02/06/2012 1:58", kind: "bak", size: "3 KB" },
  { name: "satelite_br", date: "02/06/2012 1:58", kind: "txt", size: "1 KB" },
  { name: "satelite_de", date: "02/06/2012 1:58", kind: "txt", size: "1 KB" },
  { name: "satelite_en", date: "02/06/2012 1:58", kind: "txt", size: "1 KB" },
  { name: "satelite_es", date: "02/06/2012 21:36", kind: "txt", size: "1 KB", state: "selected" },
  { name: "satelite_fr", date: "02/06/2012 1:58", kind: "txt", size: "1 KB" },
  { name: "satelite_it", date: "02/06/2012 1:58", kind: "txt", size: "1 KB" },
  { name: "server", date: "11/06/2012 0:30", kind: "txt", size: "1 KB" },
  { name: "version", date: "17/09/2011 18:36", kind: "txt", size: "1 KB", state: "selected" },
]

const kinds = {
  folder: { label: "Carpeta de archivos", icon: <FolderIcon /> },
  txt: { label: "Documento de tex...", icon: <TextFileIcon /> },
  prx: { label: "Archivo PRX", icon: <FileIcon /> },
  bak: { label: "Archivo TXT~", icon: <FileIcon /> },
}

const states = {
  focused: "bg-[#d1e8ff] border border-[#66a7e8]",
  selected: "bg-[#cbe8f6] border border-[#26a0da]",
}

const headCell = "h-[21px] border-r border-[#e3ecf5] pt-1 leading-[18px]"

function FileList() {
  return (
    <main className="flex-1 pl-[15px]">
      <table className="w-[574px] table-fixed border-collapse text-left text-[#6d6d6d]">
        <colgroup>
          <col className="w-[257px]" />
          <col className="w-[120px]" />
          <col className="w-[120px]" />
          <col />
        </colgroup>
        <thead className="text-[#4c607a]">
          <tr className="h-[31px] align-top">
            <th scope="col" aria-sort="ascending" className="p-0 font-normal">
              <div className={clsx(headCell, "relative pl-0.5")}>
                Nombre
                <svg width="7" height="4" viewBox="0 0 7 4" aria-hidden="true" className="absolute top-px left-1/2 -translate-x-1">
                  <path d="M0 4h7L3.500 0z" fill="#5a9cc0" />
                </svg>
              </div>
            </th>
            <th scope="col" className="p-0 font-normal">
              <div className={clsx(headCell, "pl-[6px]")}>Fecha de modifica...</div>
            </th>
            <th scope="col" className="p-0 font-normal">
              <div className={clsx(headCell, "pl-[6px]")}>Tipo</div>
            </th>
            <th scope="col" className="p-0 font-normal">
              <div className={clsx(headCell, "-mr-1 pl-[6px]")}>Tamaño</div>
            </th>
          </tr>
        </thead>
        <tbody>
          {rows.map((row) => (
            <tr key={row.name} className={clsx("h-[21px]", row.state && states[row.state])}>
              <td className="p-0">
                <div className="flex items-center gap-1 pl-[3px] text-black">
                  {kinds[row.kind].icon}
                  {row.name}
                </div>
              </td>
              <td className="p-0 pl-[6px]">{row.date}</td>
              <td className="p-0 pl-[6px]">{kinds[row.kind].label}</td>
              <td className="p-0 pr-[3px] text-right">{row.size}</td>
            </tr>
          ))}
        </tbody>
      </table>
    </main>
  )
}

/* ---------- status bar ---------- */

function StatusBar() {
  return (
    <footer className="flex h-[22px] items-center pr-1 pl-[14px] text-[#1e395b]">
      <span>23 elementos</span>
      <span className="mx-[10px] h-[11px] w-px bg-[#ececec]" />
      <span>4 elementos seleccionados</span>
      <span className="ml-[10px] h-[11px] w-px bg-[#ececec]" />
      <div className="flex flex-1 justify-end">
        <button aria-label="Detalles" aria-pressed="true" className="flex size-[22px] items-center justify-center border border-[#26a0da] bg-[#cbe8f6]">
          <svg width="16" height="14" viewBox="0 0 16 14" fill="none" aria-hidden="true">
            <path d="M.5 .5h4v12h-4zM.5 4.500h4M.5 8.500h4" fill="#fff" stroke="#8b97a3" />
            <path d="M2 2.500h1M2 10.500h1" stroke="#2d6fb5" />
            <path d="M2 6.500h1" stroke="#c03028" />
            <path d="M6 2.500h4M11 2.500h4M6 6.500h4M11 6.500h4M6 10.500h4M11 10.500h4" stroke="#53606c" />
          </svg>
        </button>
        <button aria-label="Iconos grandes" className="flex size-[22px] items-center justify-center">
          <svg width="14" height="12" viewBox="0 0 14 12" aria-hidden="true">
            <path d="M.5 .5h13v11H.5z" fill="#fff" stroke="#8b97a3" />
            <path d="M2 2h10v8H2z" fill="#9fd3f2" />
            <path d="M2 2l7 3 3-1V2z" fill="#2f6fc0" />
            <path d="M2 6l4 1 6-.5V9H2z" fill="#3d8a5a" />
            <path d="M2 9h10v1H2z" fill="#2a62ae" />
          </svg>
        </button>
      </div>
    </footer>
  )
}

export default function App() {
  return (
    <div className="flex min-h-screen flex-col bg-white font-['Noto_Sans','Open_Sans',sans-serif] text-[11px] leading-4 text-black">
      <Gradients />
      <TitleBar />
      <Tabs />
      <Ribbon />
      <AddressBar />
      <div className="flex flex-1">
        <Sidebar />
        <FileList />
      </div>
      <StatusBar />
      {/* top edge of the taskbar */}
      <div className="flex h-0.5 border-t border-[#a8a8a8] bg-[#cfcfcf] pl-4">
        <span className="w-[52px] bg-[#f4f4f4]" />
        <span className="ml-[10px] w-[60px] bg-[#e6e6e6]" />
        <span className="ml-16 w-[60px] bg-[#e6e6e6]" />
        <span className="ml-0.5 w-[60px] bg-[#e6e6e6]" />
      </div>
    </div>
  )
}
